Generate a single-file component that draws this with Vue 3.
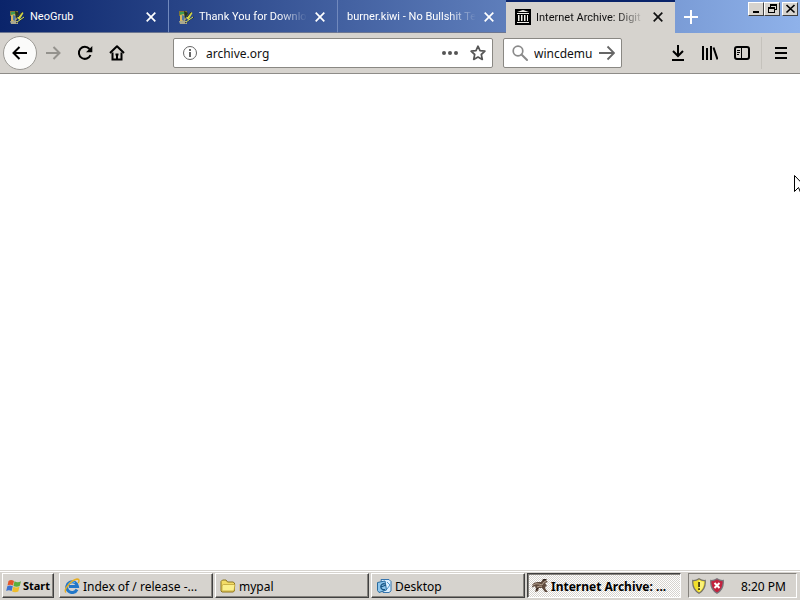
<script setup>
import { ref } from 'vue'

const tabs = [
  { title: 'NeoGrub', icon: 'grub' },
  { title: 'Thank You for Downlo', icon: 'grub', clipped: true },
  { title: 'burner.kiwi - No Bullshit Te', icon: '', clipped: true },
  { title: 'Internet Archive: Digit', icon: 'archive', clipped: true, active: true },
]
const tasks = [
  { title: 'Index of / release -...', icon: 'ie' },
  { title: 'mypal', icon: 'folder' },
  { title: 'Desktop', icon: 'desktop' },
  { title: 'Internet Archive: ...', icon: 'mypal', active: true },
]
const address = ref('archive.org')
const query = ref('wincdemu')
</script>

<template>
  <div class="screen">
    <header class="titlebar">
      <div v-for="t in tabs" :key="t.title" class="tab" :class="{ active: t.active }">
        <svg v-if="t.icon === 'grub'" class="fav" viewBox="0 0 16 16">
          <path d="M1 2h8v5H1z" fill="#7d7538" />
          <path d="M2 3h4v3H2z" fill="#3d9a50" />
          <path d="M2 6l4-1 2 5-3 4-3-1z" fill="#d8b860" />
          <path d="M4 6l3 1-1 5-2-1z" fill="#4f79a8" />
          <path d="M1 12h8v3H2z" fill="#aaa88e" />
          <path d="M6 2l4 2-3 6z" fill="#26331f" />
          <path d="M8 9l5-6 1.500 1-4 7z" fill="#d3d545" />
          <path d="M7 14l9-6M9 8l4-5" stroke="#272d28" />
          <path d="M8 13l7-5" stroke="#cfe05e" />
        </svg>
        <svg v-else-if="t.icon === 'archive'" class="fav" viewBox="0 0 16 16">
          <path d="M0 0h16v16H0z" fill="#000" />
          <path d="M8 1l6 2H2zM2 4h12v1H2zM3 6h1v6H3zM6 6h1v6H6zM9 6h1v6H9zM12 6h1v6h-1zM2 13h12v1H2z" fill="#f1efe9" />
          <path d="M4 6h1v6H4zM7 6h1v6H7zM10 6h1v6h-1z" fill="#77756f" />
        </svg>
        <span class="tab-title" :class="{ clipped: t.clipped }">{{ t.title }}</span>
        <button class="tab-close" :aria-label="'Close ' + t.title">
          <svg width="10" height="10" viewBox="0 0 10 10"><path d="M.7.7l8.600 8.600M9.300.7L.7 9.300" stroke="currentColor" stroke-width="1.700" /></svg>
        </button>
      </div>
      <button class="new-tab" aria-label="New tab">
        <svg width="14" height="14" viewBox="0 0 14 14"><path d="M7 0v14M0 7h14" stroke="#fff" stroke-width="2" /></svg>
      </button>
      <div class="window-buttons">
        <button aria-label="Minimize"><svg viewBox="0 0 11 10"><path d="M2 7h6v2H2z" /></svg></button>
        <button aria-label="Restore"><svg viewBox="0 0 11 10"><path d="M3 0h7v6H8V5h1V2H4v1H3zM1 3h7v6H1zM2 5v3h5V5z" fill-rule="evenodd" /></svg></button>
        <button class="close" aria-label="Close"><svg viewBox="0 0 11 10"><path d="M1.500 1l8 7.500M9.500 1l-8 7.500" stroke="#000" stroke-width="1.700" /></svg></button>
      </div>
    </header>

    <nav class="toolbar">
      <button class="tool back" aria-label="Back">
        <svg viewBox="0 0 16 16"><path d="M15 8H1.500M7.500 2l-6 6 6 6" class="line" /></svg>
      </button>
      <button class="tool forward" aria-label="Forward">
        <svg viewBox="0 0 16 16"><path d="M1 8h13.500M8.500 2l6 6-6 6" class="line" /></svg>
      </button>
      <button class="tool" aria-label="Reload">
        <svg viewBox="0 0 16 16"><path d="M13.500 10A6 6 0 1 1 12.500 4" class="line" /><path d="M15.300 1v6.200H9z" /></svg>
      </button>
      <button class="tool" aria-label="Home">
        <svg viewBox="0 0 16 16"><path d="M1 8l7-6.800L15 8" class="line" stroke-linejoin="round" /><path d="M3.500 7.500v7h9v-7M8 14.500V10" class="line" /><path d="M6.500 8.500h3v2h-3z" /></svg>
      </button>
      <div class="spring"></div>
      <div class="field address">
        <svg class="info" viewBox="0 0 16 16"><circle cx="8" cy="8" r="6.500" fill="none" stroke="#666" /><path d="M7 7h2v5H7zM7 4h2v2H7z" fill="#666" /></svg>
        <input v-model="address" aria-label="Address">
        <button class="field-button dots" aria-label="Page actions"><svg viewBox="0 0 16 16"><circle cx="2" cy="8" r="2" /><circle cx="8" cy="8" r="2" /><circle cx="14" cy="8" r="2" /></svg></button>
        <button class="field-button" aria-label="Bookmark this page"><svg viewBox="0 0 16 16"><path d="M8 1.200l2 4.400 4.900.6-3.600 3.300 1 4.900L8 12l-4.300 2.400 1-4.900L1.100 6.200 6 5.600z" fill="none" stroke="#555" stroke-width="1.700" stroke-linejoin="round" /></svg></button>
      </div>
      <div class="field search">
        <svg class="glass" viewBox="0 0 16 16"><circle cx="6" cy="6" r="4.800" fill="none" stroke="#8a8a8a" stroke-width="1.700" /><path d="M9.500 9.500l5.500 5.500" stroke="#8a8a8a" stroke-width="2" stroke-linecap="round" /></svg>
        <input v-model="query" aria-label="Search">
        <button class="field-button" aria-label="Search"><svg viewBox="0 0 16 16"><path d="M0 8h15M8.500 1.500L15 8l-6.500 6.500" fill="none" stroke="#666" stroke-width="1.800" /></svg></button>
      </div>
      <div class="spring"></div>
      <button class="tool" aria-label="Downloads">
        <svg viewBox="0 0 16 16"><path d="M8 0v11M3 6l5 5 5-5M2 15h12" class="line" /></svg>
      </button>
      <button class="tool" aria-label="Library">
        <svg viewBox="0 0 16 16"><path d="M1 1v14M5 3v12M9 1v14M11.500 2.500L15.500 14.500" class="line" /></svg>
      </button>
      <button class="tool" aria-label="Sidebars">
        <svg viewBox="0 0 16 16"><rect x="1" y="2" width="14" height="12" rx="2" class="line" /><path d="M7.500 2v12" stroke="#000" /><path d="M3 5.500h3M3 7.500h3M3 9.500h2" stroke="#000" /></svg>
      </button>
      <div class="divider"></div>
      <button class="tool" aria-label="Menu">
        <svg viewBox="0 0 16 16"><path d="M2 3h12M2 8h12M2 13h12" class="line" /></svg>
      </button>
    </nav>

    <main class="page"></main>

    <footer class="taskbar">
      <button class="start">
        <svg class="ico" viewBox="0 0 16 16">
          <path d="M2.500 3q2.500-2 5.500 0L7 7.500q-2.500-1.500-5.500 0z" fill="#e2562a" />
          <path d="M8.500 3.300q3 1.700 6.500 0L13.700 8q-3.200 1.500-6.200 0z" fill="#5cae3c" />
          <path d="M1.300 8.300q2.500-1.500 5.500 0L5.600 13q-2.800-1.500-5.400 0z" fill="#3b72cf" />
          <path d="M7.300 8.700q2.800 1.500 6.200 0l-1.200 4.800q-3.300 1.500-6.200 0z" fill="#efbd2c" />
        </svg>
        <span>Start</span>
      </button>
      <div class="tasks">
        <button v-for="t in tasks" :key="t.title" class="task" :class="{ pressed: t.active }">
          <svg v-if="t.icon === 'ie'" class="ico" viewBox="0 0 16 16">
            <path d="M13 11.500A5.400 5.400 0 1 1 13.500 8.500H5" fill="none" stroke="#2277c8" stroke-width="3" />
            <path d="M4 7.200A4.800 4.800 0 0 1 11 4.500" fill="none" stroke="#6cc0f3" />
            <path d="M2 14.500C-1 12 7 2 13 1c3 0 2 3 1 4" fill="none" stroke="#e6ae24" stroke-width="1.400" />
          </svg>
          <svg v-else-if="t.icon === 'folder'" class="ico" viewBox="0 0 16 16">
            <path d="M1 13V3.500L2.500 2H6l1.500 2H13l1.500 1v8L13 14H2z" fill="#f3dc66" stroke="#8b7420" />
            <path d="M2 12.500V7.500L3.500 6.500H15L14 13H2.500z" fill="#fbf08c" stroke="#b89a30" stroke-width=".7" />
          </svg>
          <svg v-else-if="t.icon === 'desktop'" class="ico" viewBox="0 0 16 16">
            <path d="M5 1.500h8l2 2V13l-2 1.500H7z" fill="#dcefff" stroke="#3574ad" />
            <path d="M1.500 4.500L9 3l1.500 9-7.500 2.500-1.500-2z" fill="#8ec6ed" stroke="#286b9f" />
            <path d="M9 6A3 3 0 1 0 9 11.500M5 9l5-2" fill="none" stroke="#175483" stroke-width="1.300" />
            <path d="M11 4l3 3-3 4" fill="none" stroke="#4e94c9" />
          </svg>
          <svg v-else class="ico" viewBox="0 0 16 16">
            <path d="M0 7q2-3 6-3l3 0 2-3 4 0-1 1.500 2 1.500-3 1 2 3-2 1 .5 2 2.500 3h-3l-3-4-3 0-1 3-3 1 1-3-1-3-2 1-2 1 2-3z" fill="#5e4a3e" />
            <path d="M1 7q3-2 6-1l3 1 2-3 2-1M5 9l3-1 2 1" fill="none" stroke="#c9b6a2" stroke-width=".8" />
            <path d="M11 2l3-.5M4 12l2-2" stroke="#241c19" />
          </svg>
          <span>{{ t.title }}</span>
        </button>
      </div>
      <div class="tray">
        <svg class="ico" viewBox="0 0 16 16">
          <path d="M8 .8q3 2 6.200 1.700Q15 11 8 15.300 1 11 1.800 2.500 5 2.800 8 .8z" fill="#f2df2b" stroke="#77746a" stroke-width="1.300" />
          <path d="M8 2.200q2.500 1.500 4.800 1.500Q13 10.500 8 13.800" fill="#fbf27b" />
          <path d="M7.200 4h1.700v5H7.200zM7.200 10.200h1.700v1.700H7.200z" fill="#38320d" />
        </svg>
        <svg class="ico" viewBox="0 0 16 16">
          <path d="M8 .8q3 2 6.200 1.700Q15 11 8 15.300 1 11 1.800 2.500 5 2.800 8 .8z" fill="#c3213e" stroke="#77747a" stroke-width="1.300" />
          <path d="M5.500 5l5 5M10.500 5l-5 5" stroke="#fff" stroke-width="2" />
        </svg>
        <time>8:20 PM</time>
      </div>
    </footer>

    <svg class="pointer" viewBox="0 0 12 20"><path d="M.5.5v16l4-4 2.500 6 2-1-2.500-5.500h5z" fill="#fff" stroke="#000" /></svg>
  </div>
</template>

<style>
body {
  margin: 0;
}
</style>

<style scoped>
.screen {
  position: relative;
  display: flex;
  flex-direction: column;
  height: 100vh;
  overflow: hidden;
  background: #fff;
  color: #000;
  font-family: "Noto Sans", "Open Sans", sans-serif;
  font-size: 12px;
}
button {
  display: flex;
  align-items: center;
  justify-content: center;
  padding: 0;
  border: 0;
  background: none;
  color: inherit;
  font: inherit;
}
svg {
  display: block;
  flex: none;
}
.titlebar {
  display: flex;
  height: 33px;
  background: linear-gradient(90deg, #0a246a, #8fb2ea);
}
.tab {
  box-sizing: border-box;
  display: flex;
  align-items: center;
  flex: 0 1 169px;
  min-width: 0;
  padding: 1px 12px 0 9px;
  border-right: 1px solid #7189bd;
  border-bottom: 1px solid #6c7691;
  color: #fff;
  font-family: Roboto, sans-serif;
  font-size: 11px;
}
.tab.active {
  margin-left: -1px;
  padding-top: 0;
  border-top: 2px solid #0a246a;
  border-right: 0;
  border-bottom-color: #d6d3ce;
  background: #d6d3ce;
  color: #111;
}
.fav {
  width: 16px;
  height: 16px;
  margin-right: 5px;
}
.tab-title {
  flex: 1;
  min-width: 0;
  overflow: hidden;
  white-space: nowrap;
}
.tab-title.clipped {
  mask-image: linear-gradient(90deg, #000 calc(100% - 28px), transparent);
}
.tab-close {
  width: 10px;
  height: 20px;
  margin-left: 8px;
}
.new-tab {
  width: 32px;
}
.window-buttons {
  display: flex;
  margin-left: auto;
  padding: 2px 2px 0 0;
}
.window-buttons button {
  box-sizing: border-box;
  width: 16px;
  height: 14px;
  border: 1px solid;
  border-color: #fff #404040 #404040 #fff;
  background: #d6d3ce;
}
.window-buttons svg {
  width: 11px;
  height: 10px;
}
.window-buttons .close {
  margin-left: 2px;
}
.toolbar {
  box-sizing: border-box;
  display: flex;
  align-items: center;
  height: 41px;
  padding: 0 3px;
  border-bottom: 1px solid #8e8c88;
  background: #d6d3ce;
}
.tool {
  flex: none;
  width: 32px;
  height: 32px;
}
.tool svg {
  width: 16px;
  height: 16px;
}
.line {
  fill: none;
  stroke: currentColor;
  stroke-width: 2;
}
.tool.back {
  box-sizing: border-box;
  width: 34px;
  height: 34px;
  border: 1px solid #9b9994;
  border-radius: 50%;
  background: #fbfbfa;
}
.forward {
  color: #94928d;
}
.spring {
  flex: 0 1 40px;
}
.field {
  box-sizing: border-box;
  display: flex;
  align-items: center;
  height: 30px;
  border: 1px solid #8a8883;
  border-radius: 2px;
  background: #fff;
}
.address {
  flex: 1;
  padding: 0 6px 0 8px;
}
.search {
  width: 119px;
  margin-left: 10px;
  padding: 0 6px 0 8px;
}
.field svg {
  width: 16px;
  height: 16px;
}
.field input {
  flex: 1;
  min-width: 0;
  height: 20px;
  margin: 0 0 0 8px;
  padding: 0;
  border: 0;
  outline: 0;
  background: none;
  color: #111;
  font: inherit;
}
.search input {
  margin-left: 6px;
}
.field-button {
  flex: none;
}
.field-button.dots {
  margin-right: 12px;
}
.dots svg {
  fill: #555;
}
.divider {
  width: 1px;
  height: 32px;
  margin: 0 3px;
  background: #c5c2bc;
}
.page {
  flex: 1;
}
.taskbar {
  display: flex;
  gap: 5px;
  height: 25px;
  padding: 2px 3px 2px 2px;
  border-top: 1px solid #d6d3ce;
  background: #d6d3ce;
  box-shadow: inset 0 1px #fff;
}
.start,
.task {
  box-sizing: border-box;
  border: 1px solid;
  border-color: #fff #404040 #404040 #fff;
  box-shadow: inset -1px -1px #85827d;
}
.start {
  width: 52px;
  gap: 1px;
  font-weight: 700;
  font-size: 11px;
}
.tasks {
  display: flex;
  flex: 1;
  gap: 2px;
  min-width: 0;
}
.task {
  flex: 0 1 154px;
  justify-content: flex-start;
  gap: 3px;
  min-width: 0;
  padding: 1px 4px 0;
  overflow: hidden;
  white-space: nowrap;
}
.task.pressed {
  border-color: #404040 #fff #fff #404040;
  background: repeating-conic-gradient(#fff 0 25%, #d6d3ce 0 50%) 0 0 / 2px 2px;
  box-shadow: inset 1px 1px #85827d;
  font-weight: 700;
}
.ico {
  width: 16px;
  height: 16px;
}
.tray {
  box-sizing: border-box;
  display: flex;
  align-items: center;
  gap: 2px;
  width: 109px;
  padding: 1px 10px 0 2px;
  border: 1px solid;
  border-color: #85827d #fff #fff #85827d;
}
.tray time {
  margin-left: auto;
}
.pointer {
  position: absolute;
  top: 175px;
  left: 794px;
  width: 12px;
  height: 20px;
}
</style>
